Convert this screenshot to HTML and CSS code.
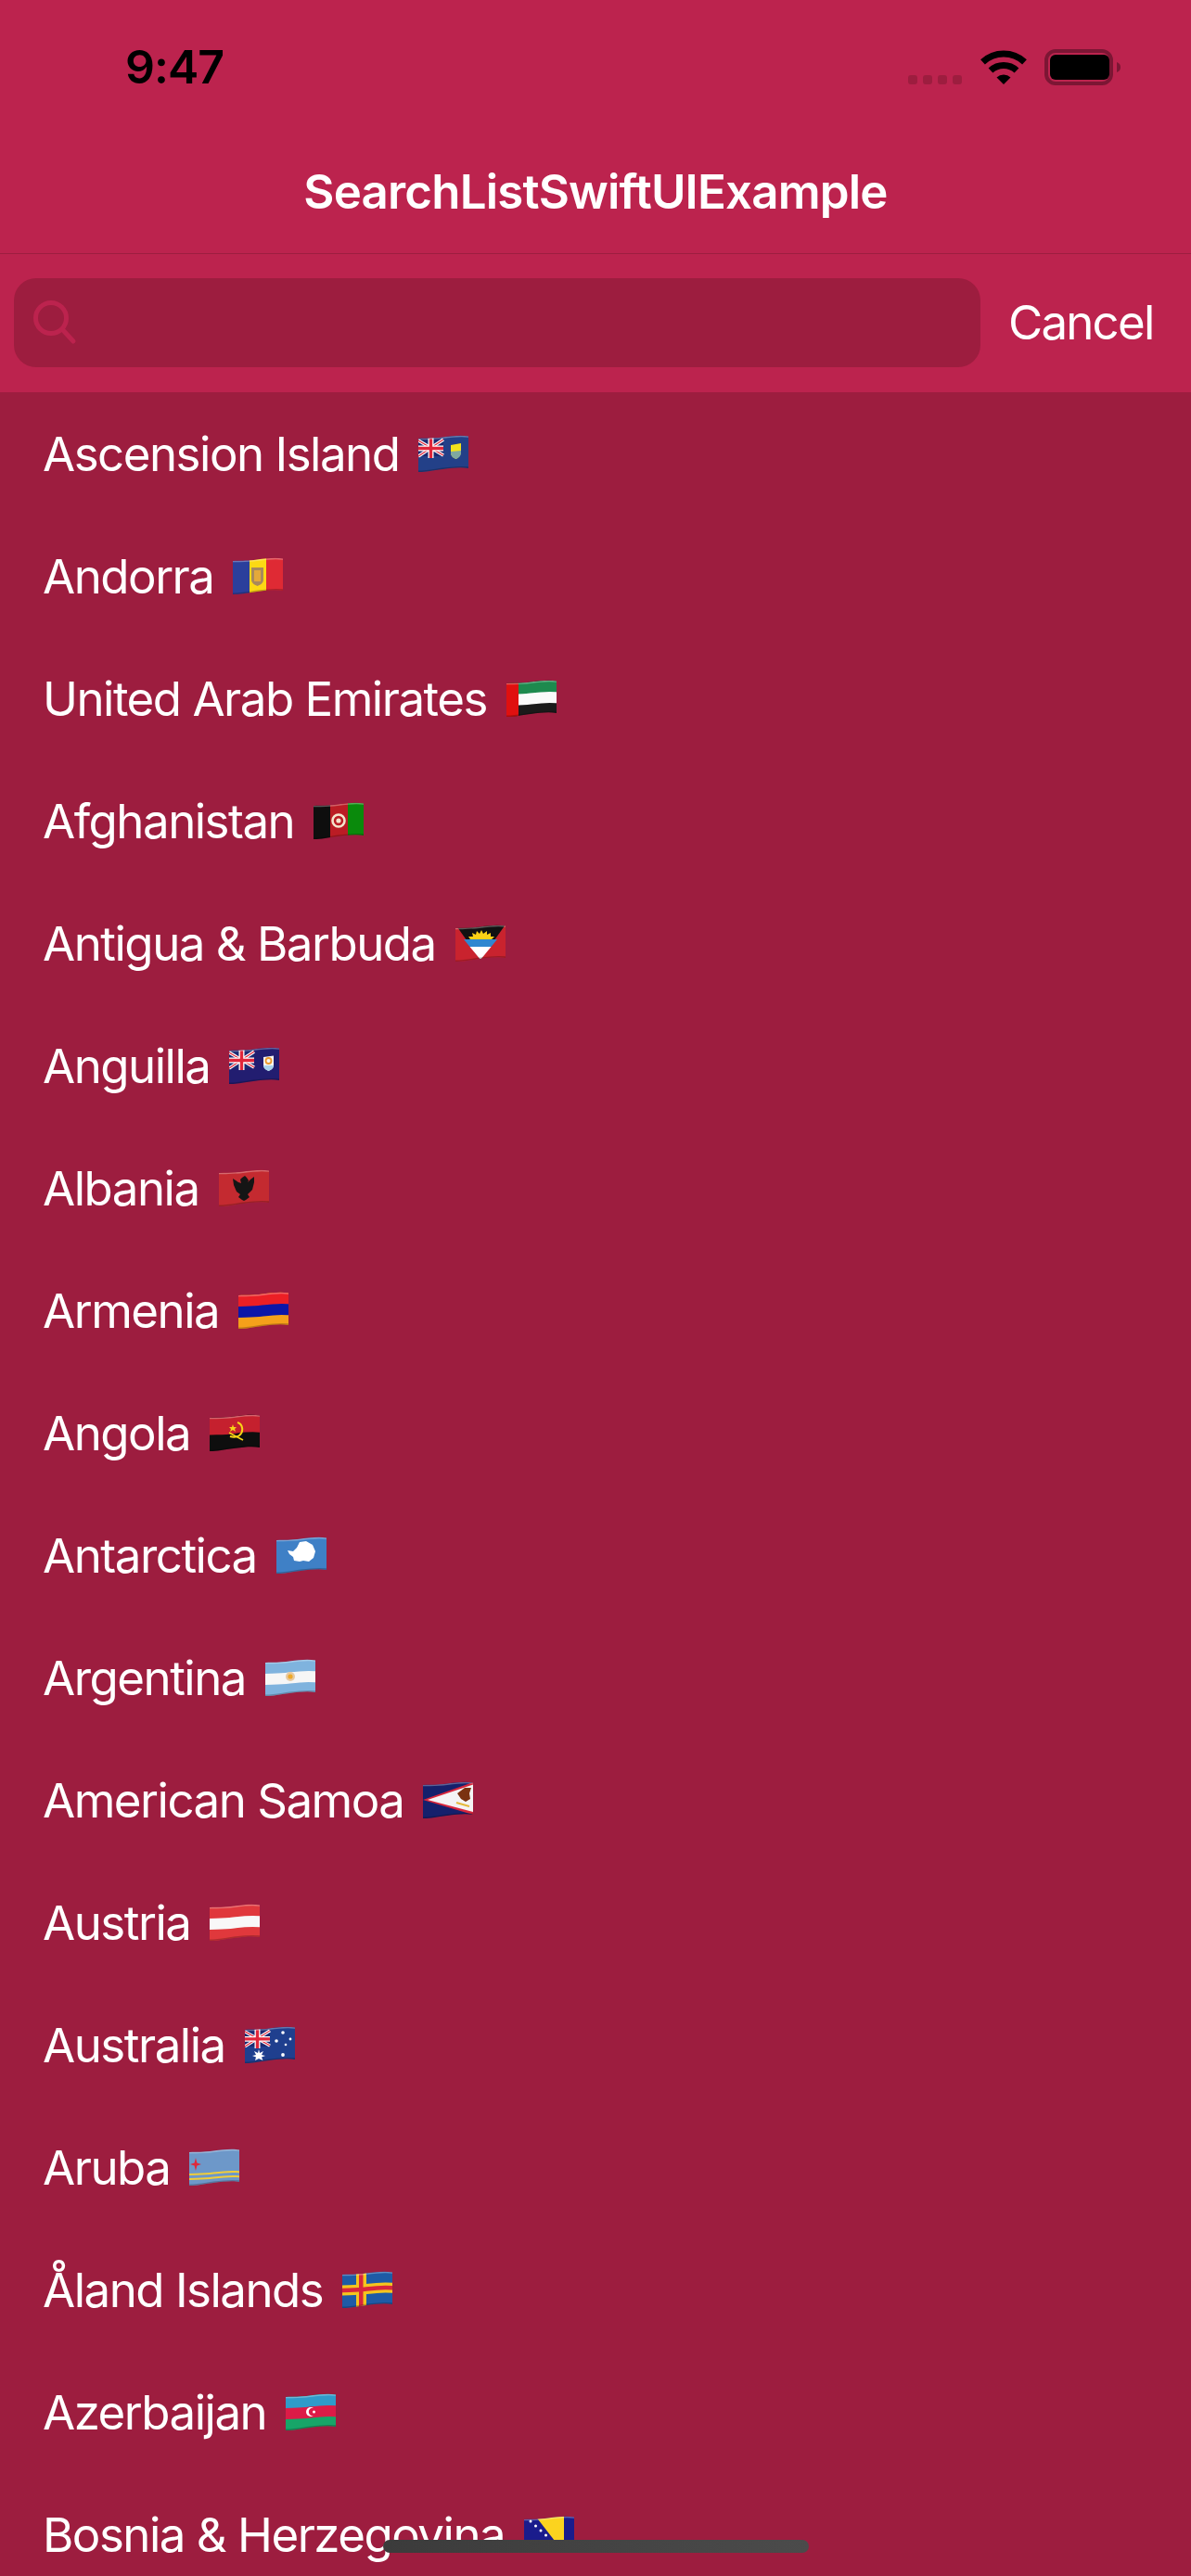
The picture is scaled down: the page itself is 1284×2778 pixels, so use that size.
FILE: index.html
```html
<!DOCTYPE html>
<html lang="en">
    <head>
        <meta charset="utf-8">
        <meta name="viewport" content="width=device-width, initial-scale=1">
        <title>SearchListSwiftUIExample</title>

        <link rel="stylesheet" href="styles.css">
    </head>
    <body>
        <!-- shared flag drawings -->
        <svg class="defs" aria-hidden="true">
            <defs>
                <clipPath id="wave"><path d="M0 4C9 3.500 15 4 26 2.500C37 1 46 0 54 1.500V36C46 34.500 37 35.500 26 37C15 38.500 9 40 0 40Z"/></clipPath>
                <path id="w" fill="none" d="M-2 4C9 3.500 15 4 26 2.500C37 1 46 0 56 1.500"/>
                <path id="w2" fill="none" d="M-2 40C9 40 15 38.500 26 37C37 35.500 46 34.500 56 36"/>

                <g id="gloss">
                    <use href="#w" y="0.6" stroke="#fff" stroke-opacity=".3" stroke-width="1.6"/>
                    <use href="#w2" y="-0.6" stroke="#000" stroke-opacity=".22" stroke-width="1.6"/>
                </g>

                <g id="jack">
                    <rect x="0" y="0" width="27" height="20" fill="#1b2a72"/>
                    <path d="M0 3L27 19M27 2L0 20" stroke="#fff" stroke-width="3.4"/>
                    <path d="M0 3L27 19M27 2L0 20" stroke="#e0263a" stroke-width="1.2"/>
                    <path d="M13.5 0V22M0 11.5H27" stroke="#fff" stroke-width="6"/>
                    <path d="M13.5 0V22M0 11.5H27" stroke="#e0263a" stroke-width="3.4"/>
                </g>

                <symbol id="f-ac" viewBox="0 0 54 40"><g clip-path="url(#wave)">
                    <rect width="54" height="40" fill="#234088"/>
                    <use href="#jack" y="3"/>
                    <path d="M35 11L46 9V18C46 22 43 25 40.5 26C38 25 35 23 35 19Z" fill="#f2e21c"/>
                    <path d="M35 18L46 17V19C46 23 43 25 40.5 26C38 25 35 23 35 19Z" fill="#7fa8a0"/>
                    <use href="#gloss"/>
                </g></symbol>

                <symbol id="f-ad" viewBox="0 0 54 40"><g clip-path="url(#wave)">
                    <rect width="18" height="40" fill="#2b3f9c"/>
                    <rect x="18" width="18" height="40" fill="#fcd914"/>
                    <rect x="36" width="18" height="40" fill="#df2a34"/>
                    <path d="M20 11H33V24C33 28 29 30 26.5 31C24 30 20 28 20 24Z" fill="#a8895c"/>
                    <rect x="23" y="14" width="7" height="12" fill="#e4a93a"/>
                    <use href="#gloss"/>
                </g></symbol>

                <symbol id="f-ae" viewBox="0 0 54 40"><g clip-path="url(#wave)">
                    <rect width="54" height="40" fill="#1a1a1a"/>
                    <use href="#w" y="6" stroke="#1d8a4e" stroke-width="13"/>
                    <use href="#w" y="18" stroke="#fafafa" stroke-width="12"/>
                    <rect width="13" height="40" fill="#e0100f"/>
                    <use href="#gloss"/>
                </g></symbol>

                <symbol id="f-af" viewBox="0 0 54 40"><g clip-path="url(#wave)">
                    <rect width="18" height="40" fill="#0e0e0e"/>
                    <rect x="18" width="19" height="40" fill="#bb1c24"/>
                    <rect x="37" width="17" height="40" fill="#0a8a0c"/>
                    <circle cx="27" cy="20" r="6.5" fill="none" stroke="#f4e4cc" stroke-width="2.6"/>
                    <circle cx="27" cy="20" r="2.6" fill="#f4e4cc"/>
                    <use href="#gloss"/>
                </g></symbol>

                <symbol id="f-ag" viewBox="0 0 54 40"><g clip-path="url(#wave)">
                    <rect width="54" height="40" fill="#c9232e"/>
                    <path d="M0 0H54L27 38Z" fill="#111"/>
                    <path d="M16 16L14 13L19 13L18 9L22 11L23 7L26 10L28 6L30 10L34 7L34 11L38 9L38 13L42 13L39 16Z" fill="#fcd116"/>
                    <path d="M9 16H45L38.5 24H15.5Z" fill="#2f87d0"/>
                    <path d="M15.5 24H38.5L27 38Z" fill="#fff"/>
                    <use href="#gloss"/>
                </g></symbol>

                <symbol id="f-ai" viewBox="0 0 54 40"><g clip-path="url(#wave)">
                    <rect width="54" height="40" fill="#221d70"/>
                    <use href="#jack" y="3"/>
                    <path d="M37 11L48 9.5V20C48 23 45 25 42.5 26C40 25 37 23 37 20Z" fill="#f6f6f2"/>
                    <path d="M37 20H48C48 23 45 25 42.5 26C40 25 37 23 37 20Z" fill="#a8d2ec"/>
                    <circle cx="42.5" cy="15" r="3" fill="none" stroke="#ec9a2c" stroke-width="1.8"/>
                    <use href="#gloss"/>
                </g></symbol>

                <symbol id="f-al" viewBox="0 0 54 40"><g clip-path="url(#wave)">
                    <rect width="54" height="40" fill="#c42a30"/>
                    <path d="M25 9L28 7L30 9L32 12L31 14L34 11L38 8L38 14L36 22L33 25L31 27L33 30L29 33L27 34L25 33L21 30L23 27L19 24L16 17L15 10L21 14L24 15L23 11Z" fill="#151515"/>
                    <use href="#gloss"/>
                </g></symbol>

                <symbol id="f-am" viewBox="0 0 54 40"><g clip-path="url(#wave)">
                    <rect width="54" height="40" fill="#f5a01a"/>
                    <use href="#w" y="6" stroke="#ec1f25" stroke-width="13"/>
                    <use href="#w" y="18" stroke="#0c16a8" stroke-width="12"/>
                    <use href="#gloss"/>
                </g></symbol>

                <symbol id="f-ao" viewBox="0 0 54 40"><g clip-path="url(#wave)">
                    <rect width="54" height="40" fill="#0e0e0e"/>
                    <use href="#w" y="9" stroke="#c5202e" stroke-width="19"/>
                    <path d="M30 9C36 11 37 19 32 23C29 25 25 25 22 24" fill="none" stroke="#f7d417" stroke-width="2"/>
                    <path d="M21 20L36 28" stroke="#f7d417" stroke-width="1.6"/>
                    <path d="M25 11L26 14L29 14L27 16L28 19L25 17L22 19L23 16L21 14L24 14Z" fill="#f7d417"/>
                    <use href="#gloss"/>
                </g></symbol>

                <symbol id="f-aq" viewBox="0 0 54 40"><g clip-path="url(#wave)">
                    <rect width="54" height="40" fill="#3f80c6"/>
                    <path d="M12 15L18 16L22 12L25 6L32 5L39 9L42 16L40 23L35 27L29 26L25 27L19 26L18 22L14 19Z" fill="#fff"/>
                    <use href="#gloss"/>
                </g></symbol>

                <symbol id="f-ar" viewBox="0 0 54 40"><g clip-path="url(#wave)">
                    <rect width="54" height="40" fill="#7fb3de"/>
                    <use href="#w" y="18" stroke="#f6f6f6" stroke-width="12"/>
                    <circle cx="27" cy="19" r="5" fill="#e8c9a0"/>
                    <circle cx="27" cy="19" r="2.6" fill="#eda92a"/>
                    <use href="#gloss"/>
                </g></symbol>

                <symbol id="f-as" viewBox="0 0 54 40"><g clip-path="url(#wave)">
                    <rect width="54" height="40" fill="#15206c"/>
                    <path d="M0 20L54 1V36Z" fill="#d8263c"/>
                    <path d="M5 20L54 3.5V33Z" fill="#f4f4f4"/>
                    <path d="M37 13L45 7L52 7L50 13L51 19L46 22L41 19Z" fill="#7a3210"/>
                    <path d="M36 23L50 27" stroke="#e4b83a" stroke-width="2"/>
                    <use href="#gloss"/>
                </g></symbol>

                <symbol id="f-at" viewBox="0 0 54 40"><g clip-path="url(#wave)">
                    <rect width="54" height="40" fill="#e0383c"/>
                    <use href="#w" y="18" stroke="#f8f8f8" stroke-width="12"/>
                    <use href="#gloss"/>
                </g></symbol>

                <symbol id="f-au" viewBox="0 0 54 40"><g clip-path="url(#wave)">
                    <rect width="54" height="40" fill="#1f3f8e"/>
                    <g transform="translate(0 3) scale(1 .95)"><use href="#jack"/></g>
                    <path d="M15 25L16 29L20 27L18 31L22 32L18 33.5L19.5 37L15 35L11 37L12 33.5L8 32L12 31L10 27L14 29Z" fill="#fff"/>
                    <circle cx="41" cy="7" r="1.8" fill="#fff"/>
                    <circle cx="34" cy="16" r="1.8" fill="#fff"/>
                    <circle cx="49" cy="14" r="1.4" fill="#fff"/>
                    <circle cx="44" cy="20" r="1.3" fill="#fff"/>
                    <circle cx="41" cy="31" r="1.9" fill="#fff"/>
                    <use href="#gloss"/>
                </g></symbol>

                <symbol id="f-aw" viewBox="0 0 54 40"><g clip-path="url(#wave)">
                    <rect width="54" height="40" fill="#6d98c9"/>
                    <use href="#w" y="24" stroke="#f0cd3a" stroke-width="2"/>
                    <use href="#w" y="29" stroke="#f0cd3a" stroke-width="2"/>
                    <path d="M7 10L8.4 15.6L13 17L8.4 18.4L7 24L5.6 18.4L1 17L5.6 15.6Z" fill="#e0283a"/>
                    <use href="#gloss"/>
                </g></symbol>

                <symbol id="f-ax" viewBox="0 0 54 40"><g clip-path="url(#wave)">
                    <rect width="54" height="40" fill="#1e5ba6"/>
                    <use href="#w" y="17" stroke="#f4c51e" stroke-width="11"/>
                    <rect x="15" width="11" height="40" fill="#f4c51e"/>
                    <use href="#w" y="17" stroke="#d8263c" stroke-width="4.5"/>
                    <rect x="18" width="4.5" height="40" fill="#d8263c"/>
                    <use href="#gloss"/>
                </g></symbol>

                <symbol id="f-az" viewBox="0 0 54 40"><g clip-path="url(#wave)">
                    <rect width="54" height="40" fill="#17a568"/>
                    <use href="#w" y="6" stroke="#2f9bc9" stroke-width="13"/>
                    <use href="#w" y="18" stroke="#dd1b47" stroke-width="12"/>
                    <circle cx="27" cy="20" r="5" fill="#fff"/>
                    <circle cx="29" cy="20" r="4.2" fill="#dd1b47"/>
                    <circle cx="30.5" cy="20" r="1.5" fill="#fff"/>
                    <use href="#gloss"/>
                </g></symbol>

                <symbol id="f-ba" viewBox="0 0 54 40"><g clip-path="url(#wave)">
                    <rect width="54" height="40" fill="#1a1c8c"/>
                    <path d="M12 0H43V40Z" fill="#fbd31f"/>
                    <circle cx="7" cy="6" r="1.5" fill="#fff"/>
                    <circle cx="12.500" cy="11" r="1.500" fill="#fff"/>
                    <circle cx="18" cy="16" r="1.500" fill="#fff"/>
                    <circle cx="23.500" cy="21" r="1.500" fill="#fff"/>
                    <use href="#gloss"/>
                </g></symbol>
            </defs>
        </svg>

        <div class="screen">
            <div class="topbar">
                <div class="status">
                    <span class="time">9:47</span>
                    <div class="status-icons">
                        <div class="signal"><i></i><i></i><i></i><i></i></div>
                        <svg class="wifi" width="50" height="37" viewBox="0 0 50 37">
                            <path d="M2.500 12.900A33 33 0 0 1 47.500 12.900" fill="none" stroke="#000" stroke-width="7"/>
                            <path d="M11 22A20.500 20.500 0 0 1 39 22" fill="none" stroke="#000" stroke-width="7"/>
                            <path d="M25 37L17.500 29.500A11 11 0 0 1 32.500 29.500Z" fill="#000"/>
                        </svg>
                        <svg class="battery" width="82" height="39" viewBox="0 0 82 39">
                            <rect x="2" y="2" width="70" height="35" rx="10" fill="none" stroke="#7c1634" stroke-width="4"/>
                            <rect x="6" y="6" width="64" height="27" rx="6" fill="#000"/>
                            <path d="M78 14C81 15 82 17 82 19.500C82 22 81 24 78 25Z" fill="#7c1634"/>
                        </svg>
                    </div>
                </div>
                <div class="nav">SearchListSwiftUIExample</div>
                <div class="search-row">
                    <div class="search-field">
                        <svg class="search-icon" width="50" height="50" viewBox="0 0 50 50">
                            <circle cx="20" cy="20" r="16.500" fill="none" stroke="#bc234e" stroke-width="5"/>
                            <path d="M32 32L44 45" fill="none" stroke="#bc234e" stroke-width="5" stroke-linecap="round"/>
                        </svg>
                    </div>
                    <span class="cancel">Cancel</span>
                </div>
            </div>

            <ul class="list">
                <li class="row"><span>Ascension Island</span><svg class="flag"><use href="#f-ac"/></svg></li>
                <li class="row"><span>Andorra</span><svg class="flag"><use href="#f-ad"/></svg></li>
                <li class="row"><span>United Arab Emirates</span><svg class="flag"><use href="#f-ae"/></svg></li>
                <li class="row"><span>Afghanistan</span><svg class="flag"><use href="#f-af"/></svg></li>
                <li class="row"><span>Antigua &amp; Barbuda</span><svg class="flag"><use href="#f-ag"/></svg></li>
                <li class="row"><span>Anguilla</span><svg class="flag"><use href="#f-ai"/></svg></li>
                <li class="row"><span>Albania</span><svg class="flag"><use href="#f-al"/></svg></li>
                <li class="row"><span>Armenia</span><svg class="flag"><use href="#f-am"/></svg></li>
                <li class="row"><span>Angola</span><svg class="flag"><use href="#f-ao"/></svg></li>
                <li class="row"><span>Antarctica</span><svg class="flag"><use href="#f-aq"/></svg></li>
                <li class="row"><span>Argentina</span><svg class="flag"><use href="#f-ar"/></svg></li>
                <li class="row"><span>American Samoa</span><svg class="flag"><use href="#f-as"/></svg></li>
                <li class="row"><span>Austria</span><svg class="flag"><use href="#f-at"/></svg></li>
                <li class="row"><span>Australia</span><svg class="flag"><use href="#f-au"/></svg></li>
                <li class="row"><span>Aruba</span><svg class="flag"><use href="#f-aw"/></svg></li>
                <li class="row"><span>Åland Islands</span><svg class="flag"><use href="#f-ax"/></svg></li>
                <li class="row"><span>Azerbaijan</span><svg class="flag"><use href="#f-az"/></svg></li>
                <li class="row"><span>Bosnia &amp; Herzegovina</span><svg class="flag"><use href="#f-ba"/></svg></li>
            </ul>

            <div class="home-indicator"></div>
        </div>
    </body>
</html>
```

FILE: styles.css
```css
body {
    margin: 0;
    background-color: #9d1d3f;
    font-family: "Inter", "Liberation Sans", sans-serif;
    color: white;
}

.defs {
    position: absolute;
    width: 0;
    height: 0;
}

.screen {
    position: relative;
    height: 2778px;
    overflow: hidden;
}

.topbar {
    background-color: #bc234e;
}

.status {
    height: 132px;
    padding: 0 76px 0 135px;
    display: flex;
    justify-content: space-between;
    box-sizing: border-box;
}

.time {
    margin-top: 41px;
    font-size: 50px;
    line-height: 62px;
    font-weight: 600;
    letter-spacing: -1px;
    color: black;
}

.status-icons {
    display: flex;
    align-items: flex-end;
    height: 92px;
}

.signal {
    display: flex;
    gap: 6px;
    margin-right: 20px;
    margin-bottom: 1px;
}

.signal i {
    width: 10px;
    height: 10px;
    border-radius: 3px;
    background-color: #9d1d3f;
}

.wifi {
    margin-right: 19px;
    margin-bottom: 1px;
}

.nav {
    height: 141px;
    padding-top: 8px;
    box-sizing: border-box;
    display: flex;
    align-items: center;
    justify-content: center;
    font-size: 51px;
    font-weight: 600;
    letter-spacing: -0.8px;
}

.search-row {
    display: flex;
    align-items: center;
    height: 150px;
    padding-left: 15px;
    padding-bottom: 2px;
    box-sizing: border-box;
    border-top: 1px solid #9d1d3f;
}

.search-field {
    width: 1042px;
    height: 96px;
    display: flex;
    align-items: center;
    padding-left: 20px;
    box-sizing: border-box;
    background-color: #9d1d3f;
    border-radius: 24px;
}

.cancel {
    margin-left: 30px;
    font-size: 51px;
    letter-spacing: -1.8px;
}

.list {
    margin: 0;
    padding: 0;
    list-style: none;
}

.row {
    height: 132px;
    padding-left: 46px;
    display: flex;
    align-items: center;
    font-size: 51px;
    letter-spacing: -1.5px;
}

.flag {
    width: 54px;
    height: 40px;
    margin-left: 21px;
    flex: none;
}

.home-indicator {
    position: absolute;
    left: 413px;
    top: 2739px;
    width: 459px;
    height: 14px;
    border-radius: 7px;
    background: linear-gradient(90deg, #3b3b3b, #4b4b4b);
}
```
